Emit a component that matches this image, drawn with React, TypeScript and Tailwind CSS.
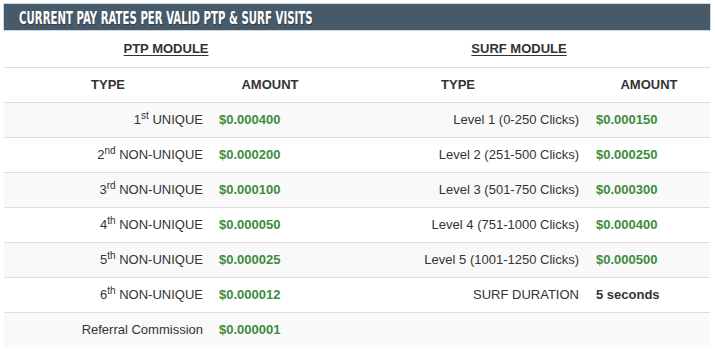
import React from "react";

const ptp: [string, string | null, string, string][] = [
  ["1", "st", " UNIQUE", "$0.000400"],
  ["2", "nd", " NON-UNIQUE", "$0.000200"],
  ["3", "rd", " NON-UNIQUE", "$0.000100"],
  ["4", "th", " NON-UNIQUE", "$0.000050"],
  ["5", "th", " NON-UNIQUE", "$0.000025"],
  ["6", "th", " NON-UNIQUE", "$0.000012"],
  ["Referral Commission", null, "", "$0.000001"],
];

const surf: [string, string, boolean][] = [
  ["Level 1 (0-250 Clicks)", "$0.000150", true],
  ["Level 2 (251-500 Clicks)", "$0.000250", true],
  ["Level 3 (501-750 Clicks)", "$0.000300", true],
  ["Level 4 (751-1000 Clicks)", "$0.000400", true],
  ["Level 5 (1001-1250 Clicks)", "$0.000500", true],
  ["SURF DURATION", "5 seconds", false],
  ["", "", false],
];

const cols = "grid grid-cols-[208px_116px_260px_122px]";

export default function App() {
  return (
    <div
      className="w-[715px] h-[349px] bg-white pt-[3px] pl-[3px] text-[13px] text-[#333]"
      style={{ fontFamily: '"Liberation Sans", Arial, sans-serif' }}
    >
      <div className="w-[708px] h-[28px] bg-[#475a69] border border-[#cfd6dc] flex items-center pl-[15px] overflow-hidden">
        <span
          className="inline-block text-white font-bold text-[18px] leading-none whitespace-nowrap origin-left scale-x-[0.63] mt-[1px]"
          style={{
            fontFamily: '"DejaVu Sans Condensed", "DejaVu Sans", sans-serif',
            textShadow: "1px 1px 0 rgba(0,0,0,0.35)",
          }}
        >
          CURRENT PAY RATES PER VALID PTP &amp; SURF VISITS
        </span>
      </div>
      <div className="w-[706px] ml-[1px]">
        <div className={`${cols} h-[36px] items-center font-bold`}>
          <div className="col-span-2 text-center">
            <span className="underline underline-offset-[2px]">PTP MODULE</span>
          </div>
          <div className="col-span-2 text-center">
            <span className="underline underline-offset-[2px]">SURF MODULE</span>
          </div>
        </div>
        <div className={`${cols} h-[35px] items-center font-bold border-t border-[#dddddd]`}>
          <div className="text-center">TYPE</div>
          <div className="text-center">AMOUNT</div>
          <div className="text-center">TYPE</div>
          <div className="text-center">AMOUNT</div>
        </div>
        {ptp.map((p, i) => {
          const s = surf[i];
          return (
            <div
              key={i}
              className={`${cols} h-[35px] items-center border-t border-[#dddddd] ${
                i % 2 === 0 ? "bg-[#f9f9f9]" : "bg-white"
              }`}
            >
              <div className="text-right pr-[9px]">
                {p[0]}
                {p[1] && <sup className="text-[10px]">{p[1]}</sup>}
                {p[2]}
              </div>
              <div className="pl-[7px] font-bold text-[#3d8b3d]">{p[3]}</div>
              <div className="text-right pr-[9px]">{s[0]}</div>
              <div className={`pl-[8px] font-bold ${s[2] ? "text-[#3d8b3d]" : "text-[#333]"}`}>
                {s[1]}
              </div>
            </div>
          );
        })}
      </div>
    </div>
  );
}
